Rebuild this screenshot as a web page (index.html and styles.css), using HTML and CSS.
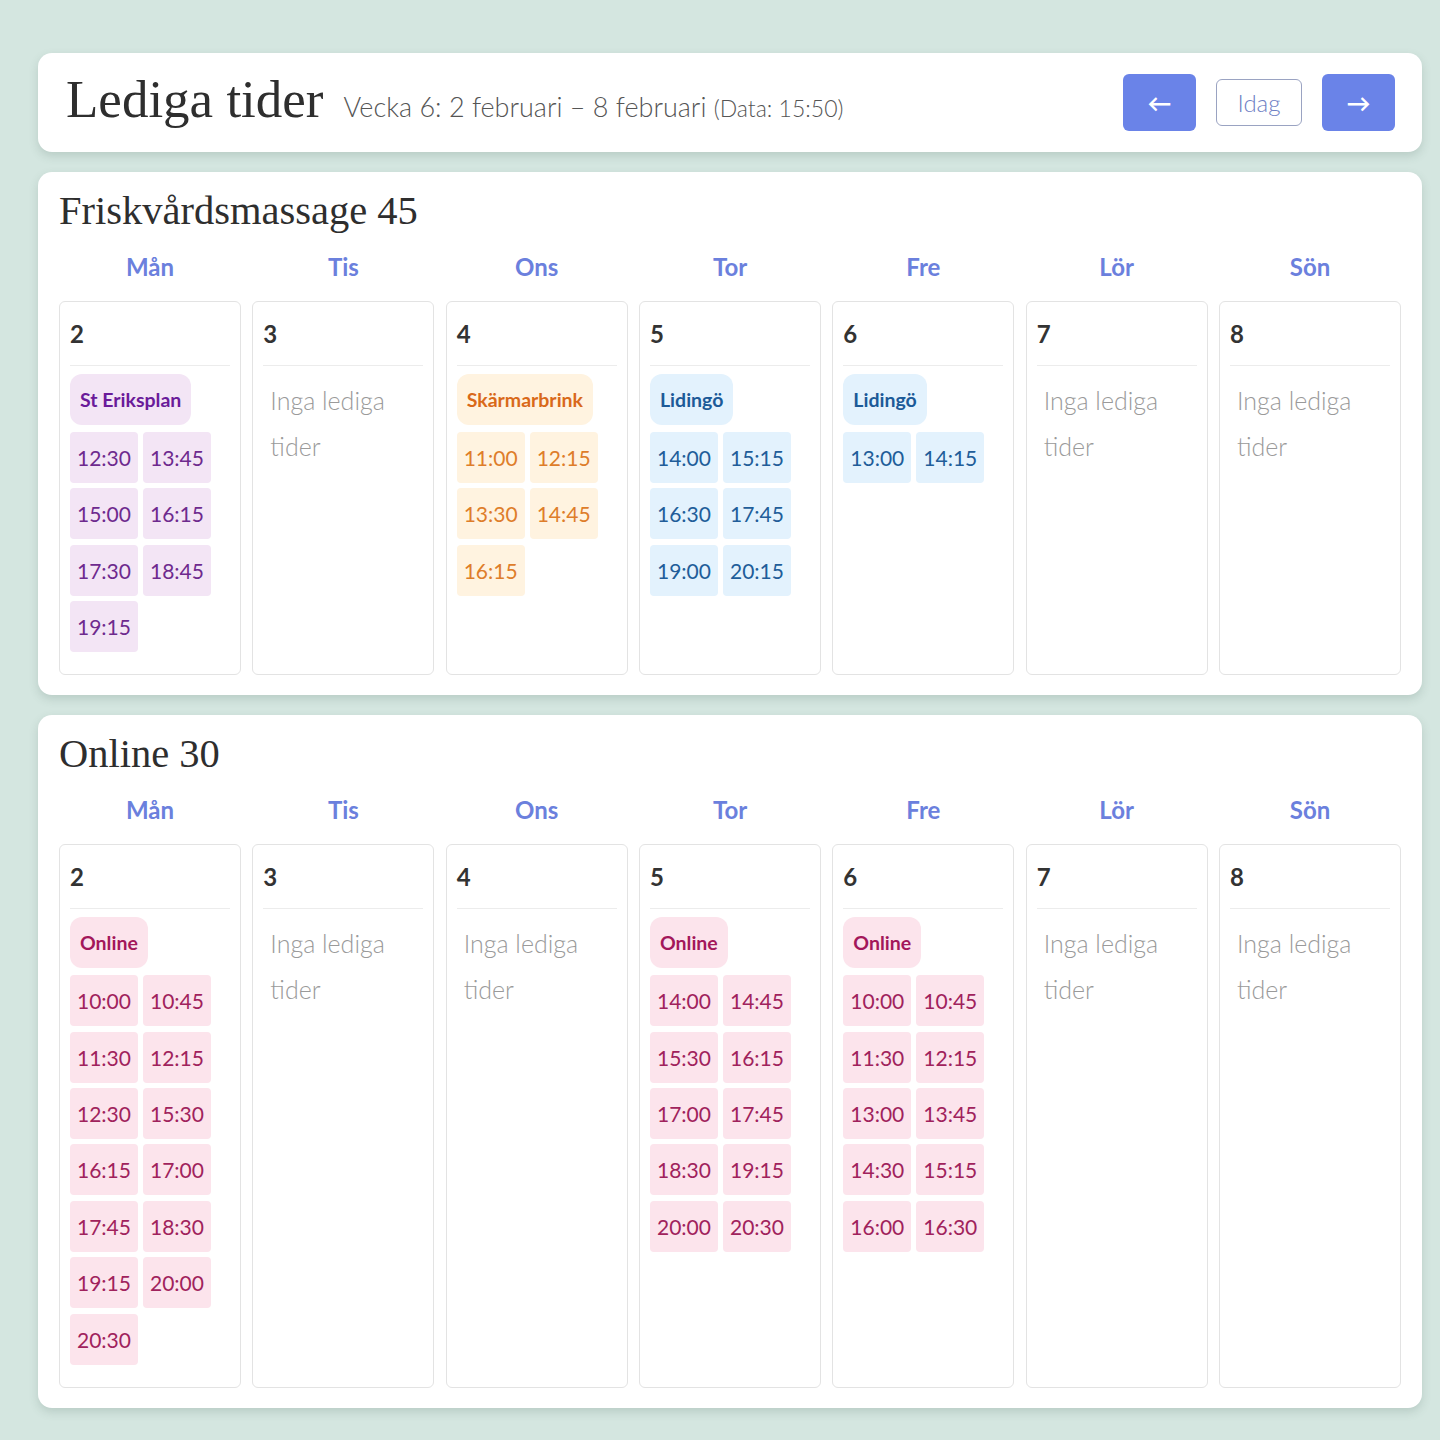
FILE: index.html
```html
<!DOCTYPE html>
<html lang="sv">
<head>
<meta charset="utf-8">
<title>Lediga tider</title>
<link rel="stylesheet" href="styles.css">
</head>
<body>
<div class="page">
  <header class="card top">
    <div class="titlewrap">
      <h1 class="title">Lediga tider</h1>
      <span class="sub">Vecka 6: 2 februari – 8 februari <small>(Data: 15:50)</small></span>
    </div>
    <div class="nav">
      <button class="btn btn-blue">&larr;</button>
      <button class="btn btn-outline">Idag</button>
      <button class="btn btn-blue">&rarr;</button>
    </div>
  </header>

  <section class="card section">
    <h2 class="stitle">Friskvårdsmassage 45</h2>
    <div class="grid daynames">
      <div>Mån</div><div>Tis</div><div>Ons</div><div>Tor</div><div>Fre</div><div>Lör</div><div>Sön</div>
    </div>
    <div class="grid days">
      <div class="day"><div class="num">2</div>
        <div class="slots purple">
          <span class="loc">St Eriksplan</span>
          <div class="times"><span class="t">12:30</span><span class="t">13:45</span><span class="t">15:00</span><span class="t">16:15</span><span class="t">17:30</span><span class="t">18:45</span><span class="t">19:15</span></div>
        </div></div>
      <div class="day"><div class="num">3</div><div class="none">Inga lediga tider</div></div>
      <div class="day"><div class="num">4</div>
        <div class="slots orange">
          <span class="loc">Skärmarbrink</span>
          <div class="times"><span class="t">11:00</span><span class="t">12:15</span><span class="t">13:30</span><span class="t">14:45</span><span class="t">16:15</span></div>
        </div></div>
      <div class="day"><div class="num">5</div>
        <div class="slots blue">
          <span class="loc">Lidingö</span>
          <div class="times"><span class="t">14:00</span><span class="t">15:15</span><span class="t">16:30</span><span class="t">17:45</span><span class="t">19:00</span><span class="t">20:15</span></div>
        </div></div>
      <div class="day"><div class="num">6</div>
        <div class="slots blue">
          <span class="loc">Lidingö</span>
          <div class="times"><span class="t">13:00</span><span class="t">14:15</span></div>
        </div></div>
      <div class="day"><div class="num">7</div><div class="none">Inga lediga tider</div></div>
      <div class="day"><div class="num">8</div><div class="none">Inga lediga tider</div></div>
    </div>
  </section>

  <section class="card section">
    <h2 class="stitle">Online 30</h2>
    <div class="grid daynames">
      <div>Mån</div><div>Tis</div><div>Ons</div><div>Tor</div><div>Fre</div><div>Lör</div><div>Sön</div>
    </div>
    <div class="grid days">
      <div class="day"><div class="num">2</div>
        <div class="slots pink">
          <span class="loc">Online</span>
          <div class="times"><span class="t">10:00</span><span class="t">10:45</span><span class="t">11:30</span><span class="t">12:15</span><span class="t">12:30</span><span class="t">15:30</span><span class="t">16:15</span><span class="t">17:00</span><span class="t">17:45</span><span class="t">18:30</span><span class="t">19:15</span><span class="t">20:00</span><span class="t">20:30</span></div>
        </div></div>
      <div class="day"><div class="num">3</div><div class="none">Inga lediga tider</div></div>
      <div class="day"><div class="num">4</div><div class="none">Inga lediga tider</div></div>
      <div class="day"><div class="num">5</div>
        <div class="slots pink">
          <span class="loc">Online</span>
          <div class="times"><span class="t">14:00</span><span class="t">14:45</span><span class="t">15:30</span><span class="t">16:15</span><span class="t">17:00</span><span class="t">17:45</span><span class="t">18:30</span><span class="t">19:15</span><span class="t">20:00</span><span class="t">20:30</span></div>
        </div></div>
      <div class="day"><div class="num">6</div>
        <div class="slots pink">
          <span class="loc">Online</span>
          <div class="times"><span class="t">10:00</span><span class="t">10:45</span><span class="t">11:30</span><span class="t">12:15</span><span class="t">13:00</span><span class="t">13:45</span><span class="t">14:30</span><span class="t">15:15</span><span class="t">16:00</span><span class="t">16:30</span></div>
        </div></div>
      <div class="day"><div class="num">7</div><div class="none">Inga lediga tider</div></div>
      <div class="day"><div class="num">8</div><div class="none">Inga lediga tider</div></div>
    </div>
  </section>
</div>
</body>
</html>
```

FILE: styles.css
```css
html, body {
  margin: 0;
  padding: 0;
  background: #d4e6e0;
  font-family: Lato, "Open Sans", sans-serif;
  color: #333;
}
.page {
  width: 1384px;
  margin: 0 18px 0 38px;
  padding: 53px 0 30px;
  display: flex;
  flex-direction: column;
  gap: 20px;
}
.card {
  background: #fff;
  border-radius: 14px;
  box-shadow: 0 4px 10px rgba(60, 90, 80, 0.18);
}
.top {
  height: 99px;
  box-sizing: border-box;
  padding: 0 27px 0 28px;
  display: flex;
  align-items: center;
  justify-content: space-between;
}
.titlewrap {
  display: flex;
  align-items: baseline;
  gap: 20px;
  margin-top: -8px;
}
.title {
  margin: 0;
  font-family: "Liberation Serif", "DejaVu Serif", serif;
  font-weight: 400;
  font-size: 53px;
  color: #2e2e2e;
}
.sub {
  font-size: 27px;
  color: #555;
  font-weight: 300;
}
.sub small {
  font-size: 23px;
}
.nav {
  display: flex;
  align-items: center;
  gap: 20px;
}
.btn {
  font-family: Lato, sans-serif;
  border-radius: 6px;
  cursor: pointer;
}
.btn-blue {
  width: 73px;
  height: 57px;
  border: none;
  background: #6a83e8;
  color: #fff;
  font-size: 24px;
  font-weight: 700;
}
.btn-outline {
  width: 86px;
  height: 47px;
  background: #fff;
  border: 1.5px solid #9aa3c2;
  color: #6e80c4;
  font-size: 24px;
  font-weight: 300;
}
.section {
  padding: 16px 21px 20px;
}
.stitle {
  margin: 0 0 16px;
  font-family: "Liberation Serif", "DejaVu Serif", serif;
  font-weight: 400;
  font-size: 40.5px;
  line-height: 46px;
  color: #2e2e2e;
}
.grid {
  display: grid;
  grid-template-columns: repeat(7, minmax(0, 1fr));
  column-gap: 11.3px;
}
.daynames {
  margin-bottom: 17px;
}
.daynames div {
  text-align: center;
  font-size: 24px;
  line-height: 34px;
  font-weight: 700;
  color: #6b80dd;
}
.day {
  border: 1px solid #e3e3e3;
  border-radius: 6px;
  padding: 10px 10px 22px;
  min-height: 340px;
  box-sizing: border-box;
}
.num {
  font-size: 24px;
  font-weight: 700;
  line-height: 44px;
  padding-bottom: 9px;
  border-bottom: 1px solid #ececec;
  margin-bottom: 8px;
  color: #333;
}
.none {
  font-size: 25px;
  font-weight: 300;
  line-height: 46px;
  color: #9a9a9a;
  padding: 3px 0 0 7px;
}
.slots {
  display: flex;
  flex-direction: column;
  align-items: flex-start;
  gap: 7px;
}
.loc {
  display: block;
  white-space: nowrap;
  padding: 10px 10px;
  line-height: 31px;
  font-size: 19.5px;
  font-weight: 700;
  border-radius: 12px;
}
.times {
  display: flex;
  flex-wrap: wrap;
  gap: 5.4px 5px;
}
.t {
  display: block;
  padding: 10px 7px;
  line-height: 31px;
  font-size: 21px;
  font-weight: 400;
  border-radius: 4px;
}
.purple .loc, .purple .t { background: #f3e5f5; }
.purple .loc { color: #6a1b9a; }
.purple .t { color: #6e2a8e; }
.orange .loc, .orange .t { background: #fff3e0; }
.orange .loc { color: #d9691a; }
.orange .t { color: #de7d2a; }
.blue .loc, .blue .t { background: #e3f2fd; }
.blue .loc { color: #1c5a98; }
.blue .t { color: #215d99; }
.pink .loc, .pink .t { background: #fce4ec; }
.pink .loc { color: #a3175a; }
.pink .t { color: #a0225c; }
```
